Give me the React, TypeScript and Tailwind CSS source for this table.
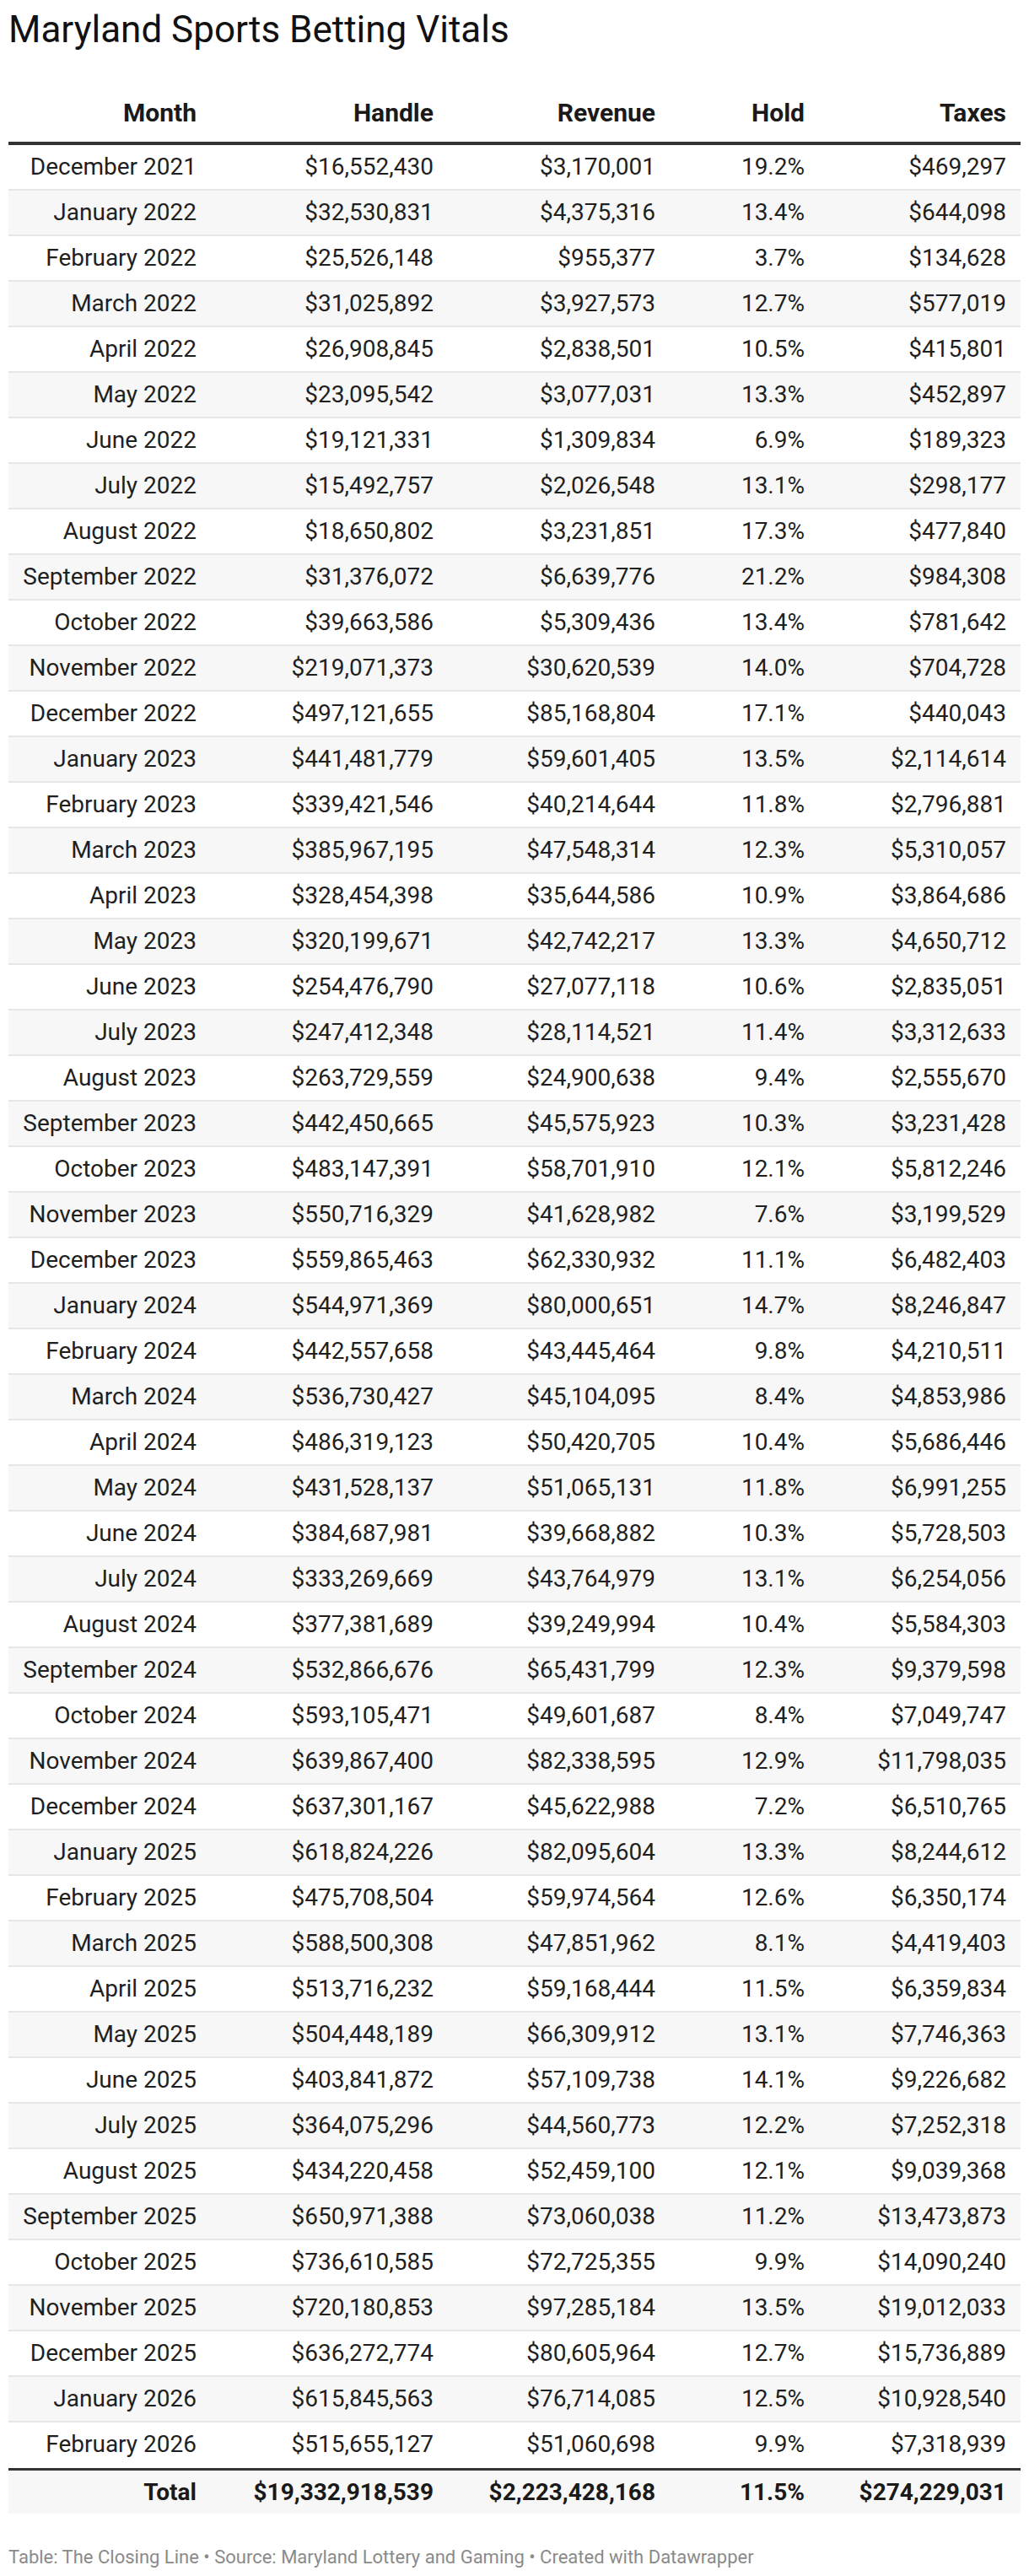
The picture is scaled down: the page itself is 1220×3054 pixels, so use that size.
const rows: [string, string, string, string, string][] = [
  ["December 2021", "$16,552,430", "$3,170,001", "19.2%", "$469,297"],
  ["January 2022", "$32,530,831", "$4,375,316", "13.4%", "$644,098"],
  ["February 2022", "$25,526,148", "$955,377", "3.7%", "$134,628"],
  ["March 2022", "$31,025,892", "$3,927,573", "12.7%", "$577,019"],
  ["April 2022", "$26,908,845", "$2,838,501", "10.5%", "$415,801"],
  ["May 2022", "$23,095,542", "$3,077,031", "13.3%", "$452,897"],
  ["June 2022", "$19,121,331", "$1,309,834", "6.9%", "$189,323"],
  ["July 2022", "$15,492,757", "$2,026,548", "13.1%", "$298,177"],
  ["August 2022", "$18,650,802", "$3,231,851", "17.3%", "$477,840"],
  ["September 2022", "$31,376,072", "$6,639,776", "21.2%", "$984,308"],
  ["October 2022", "$39,663,586", "$5,309,436", "13.4%", "$781,642"],
  ["November 2022", "$219,071,373", "$30,620,539", "14.0%", "$704,728"],
  ["December 2022", "$497,121,655", "$85,168,804", "17.1%", "$440,043"],
  ["January 2023", "$441,481,779", "$59,601,405", "13.5%", "$2,114,614"],
  ["February 2023", "$339,421,546", "$40,214,644", "11.8%", "$2,796,881"],
  ["March 2023", "$385,967,195", "$47,548,314", "12.3%", "$5,310,057"],
  ["April 2023", "$328,454,398", "$35,644,586", "10.9%", "$3,864,686"],
  ["May 2023", "$320,199,671", "$42,742,217", "13.3%", "$4,650,712"],
  ["June 2023", "$254,476,790", "$27,077,118", "10.6%", "$2,835,051"],
  ["July 2023", "$247,412,348", "$28,114,521", "11.4%", "$3,312,633"],
  ["August 2023", "$263,729,559", "$24,900,638", "9.4%", "$2,555,670"],
  ["September 2023", "$442,450,665", "$45,575,923", "10.3%", "$3,231,428"],
  ["October 2023", "$483,147,391", "$58,701,910", "12.1%", "$5,812,246"],
  ["November 2023", "$550,716,329", "$41,628,982", "7.6%", "$3,199,529"],
  ["December 2023", "$559,865,463", "$62,330,932", "11.1%", "$6,482,403"],
  ["January 2024", "$544,971,369", "$80,000,651", "14.7%", "$8,246,847"],
  ["February 2024", "$442,557,658", "$43,445,464", "9.8%", "$4,210,511"],
  ["March 2024", "$536,730,427", "$45,104,095", "8.4%", "$4,853,986"],
  ["April 2024", "$486,319,123", "$50,420,705", "10.4%", "$5,686,446"],
  ["May 2024", "$431,528,137", "$51,065,131", "11.8%", "$6,991,255"],
  ["June 2024", "$384,687,981", "$39,668,882", "10.3%", "$5,728,503"],
  ["July 2024", "$333,269,669", "$43,764,979", "13.1%", "$6,254,056"],
  ["August 2024", "$377,381,689", "$39,249,994", "10.4%", "$5,584,303"],
  ["September 2024", "$532,866,676", "$65,431,799", "12.3%", "$9,379,598"],
  ["October 2024", "$593,105,471", "$49,601,687", "8.4%", "$7,049,747"],
  ["November 2024", "$639,867,400", "$82,338,595", "12.9%", "$11,798,035"],
  ["December 2024", "$637,301,167", "$45,622,988", "7.2%", "$6,510,765"],
  ["January 2025", "$618,824,226", "$82,095,604", "13.3%", "$8,244,612"],
  ["February 2025", "$475,708,504", "$59,974,564", "12.6%", "$6,350,174"],
  ["March 2025", "$588,500,308", "$47,851,962", "8.1%", "$4,419,403"],
  ["April 2025", "$513,716,232", "$59,168,444", "11.5%", "$6,359,834"],
  ["May 2025", "$504,448,189", "$66,309,912", "13.1%", "$7,746,363"],
  ["June 2025", "$403,841,872", "$57,109,738", "14.1%", "$9,226,682"],
  ["July 2025", "$364,075,296", "$44,560,773", "12.2%", "$7,252,318"],
  ["August 2025", "$434,220,458", "$52,459,100", "12.1%", "$9,039,368"],
  ["September 2025", "$650,971,388", "$73,060,038", "11.2%", "$13,473,873"],
  ["October 2025", "$736,610,585", "$72,725,355", "9.9%", "$14,090,240"],
  ["November 2025", "$720,180,853", "$97,285,184", "13.5%", "$19,012,033"],
  ["December 2025", "$636,272,774", "$80,605,964", "12.7%", "$15,736,889"],
  ["January 2026", "$615,845,563", "$76,714,085", "12.5%", "$10,928,540"],
  ["February 2026", "$515,655,127", "$51,060,698", "9.9%", "$7,318,939"],
];

const total = ["Total", "$19,332,918,539", "$2,223,428,168", "11.5%", "$274,229,031"];
const headers = ["Month", "Handle", "Revenue", "Hold", "Taxes"];

// column grid shared by header, body and total rows
const cols = "grid grid-cols-[223px_281px_263px_177px_1fr]";

function Cells({ values }: { values: string[] }) {
  return (
    <>
      {values.map((v, i) => (
        <div key={i} className={`text-right whitespace-nowrap ${i === 4 ? "pr-[17px]" : ""}`}>
          {v}
        </div>
      ))}
    </>
  );
}

export default function App() {
  return (
    <main className="min-h-[3054px] bg-white px-[10px] pt-[9px] font-[family-name:Roboto,'Liberation_Sans',sans-serif] text-[#1f1f1f]">
      <h1 className="text-[44px] leading-[52px] font-normal text-[#111]">Maryland Sports Betting Vitals</h1>

      <section className="mt-[55px]">
        <div className={`${cols} border-b-4 border-[#333] pb-[16px] text-[30px] leading-[36px] font-bold text-[#1a1a1a]`}>
          <Cells values={headers} />
        </div>

        {rows.map((r, i) => (
          <div
            key={r[0]}
            className={`${cols} h-[54px] text-[28px] leading-[52px] ${i % 2 === 1 ? "bg-[#f7f7f7]" : "bg-white"} ${
              i < rows.length - 1 ? "border-b-2 border-[#e6e6e6]" : "h-[52px]"
            }`}
          >
            <Cells values={r} />
          </div>
        ))}

        <div className={`${cols} border-t-[3px] border-[#333] bg-[#f7f7f7] text-[28px] leading-[51px] font-bold text-[#1a1a1a]`}>
          <Cells values={total} />
        </div>
      </section>

      <p className="mt-[39px] text-[22px] leading-[26px] text-[#8a8a8a]">
        Table: The Closing Line • Source: Maryland Lottery and Gaming • Created with Datawrapper
      </p>
    </main>
  );
}
